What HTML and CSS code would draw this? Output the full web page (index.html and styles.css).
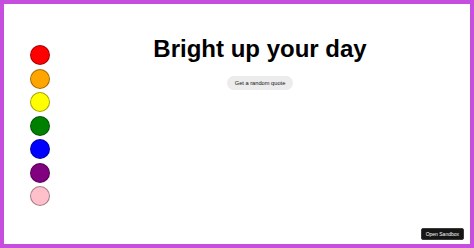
FILE: index.html
```html
<!DOCTYPE html>
<html>
<head>
<meta charset="utf-8">
<link rel="stylesheet" href="styles.css">
</head>
<body>
<div class="frame">
  <aside class="palette">
    <span class="dot red"></span>
    <span class="dot orange"></span>
    <span class="dot yellow"></span>
    <span class="dot green"></span>
    <span class="dot blue"></span>
    <span class="dot purple"></span>
    <span class="dot pink"></span>
  </aside>
  <main class="main">
    <h1 class="title">Bright up your day</h1>
    <button class="quote-btn">Get a random quote</button>
  </main>
  <button class="sandbox-btn">Open Sandbox</button>
</div>
</body>
</html>
```
FILE: styles.css
```css
html, body {
  margin: 0;
  padding: 0;
  height: 100%;
}
body {
  font-family: "Liberation Sans", Arial, sans-serif;
  background: #fff;
}
.frame {
  position: relative;
  box-sizing: border-box;
  height: 248px;
  width: 474px;
  border: 4px solid #c64edf;
  display: flex;
}
.palette {
  display: flex;
  flex-direction: column;
  gap: 3.5px;
  padding: 41px 0 0 26px;
  width: 20px;
}
.dot {
  display: block;
  width: 20px;
  height: 20px;
  box-sizing: border-box;
  border-radius: 50%;
  border: 1px solid rgba(0, 0, 0, 0.35);
}
.red { background: #ff0000; }
.orange { background: #ffa500; }
.yellow { background: #ffff00; }
.green { background: #008000; }
.blue { background: #0000ff; }
.purple { background: #800080; }
.pink { background: #ffc0cb; }
.main {
  flex: 1;
  display: flex;
  flex-direction: column;
  align-items: center;
  padding-top: 31px;
}
.title {
  margin: 0;
  font-size: 24px;
  font-weight: bold;
  color: #000;
  line-height: 28px;
}
.quote-btn {
  margin-top: 13px;
  font-family: "Liberation Sans", Arial, sans-serif;
  font-size: 5.7px;
  color: #111;
  background: #ececec;
  border: none;
  border-radius: 7px;
  height: 14px;
  padding: 0 8px;
}
.sandbox-btn {
  position: absolute;
  right: 6px;
  bottom: 4px;
  font-family: "Liberation Sans", Arial, sans-serif;
  font-size: 5px;
  color: #fff;
  background: #151515;
  border: 1px solid #3a3a3a;
  border-radius: 2px;
  height: 12px;
  padding: 0 4px;
}
```
